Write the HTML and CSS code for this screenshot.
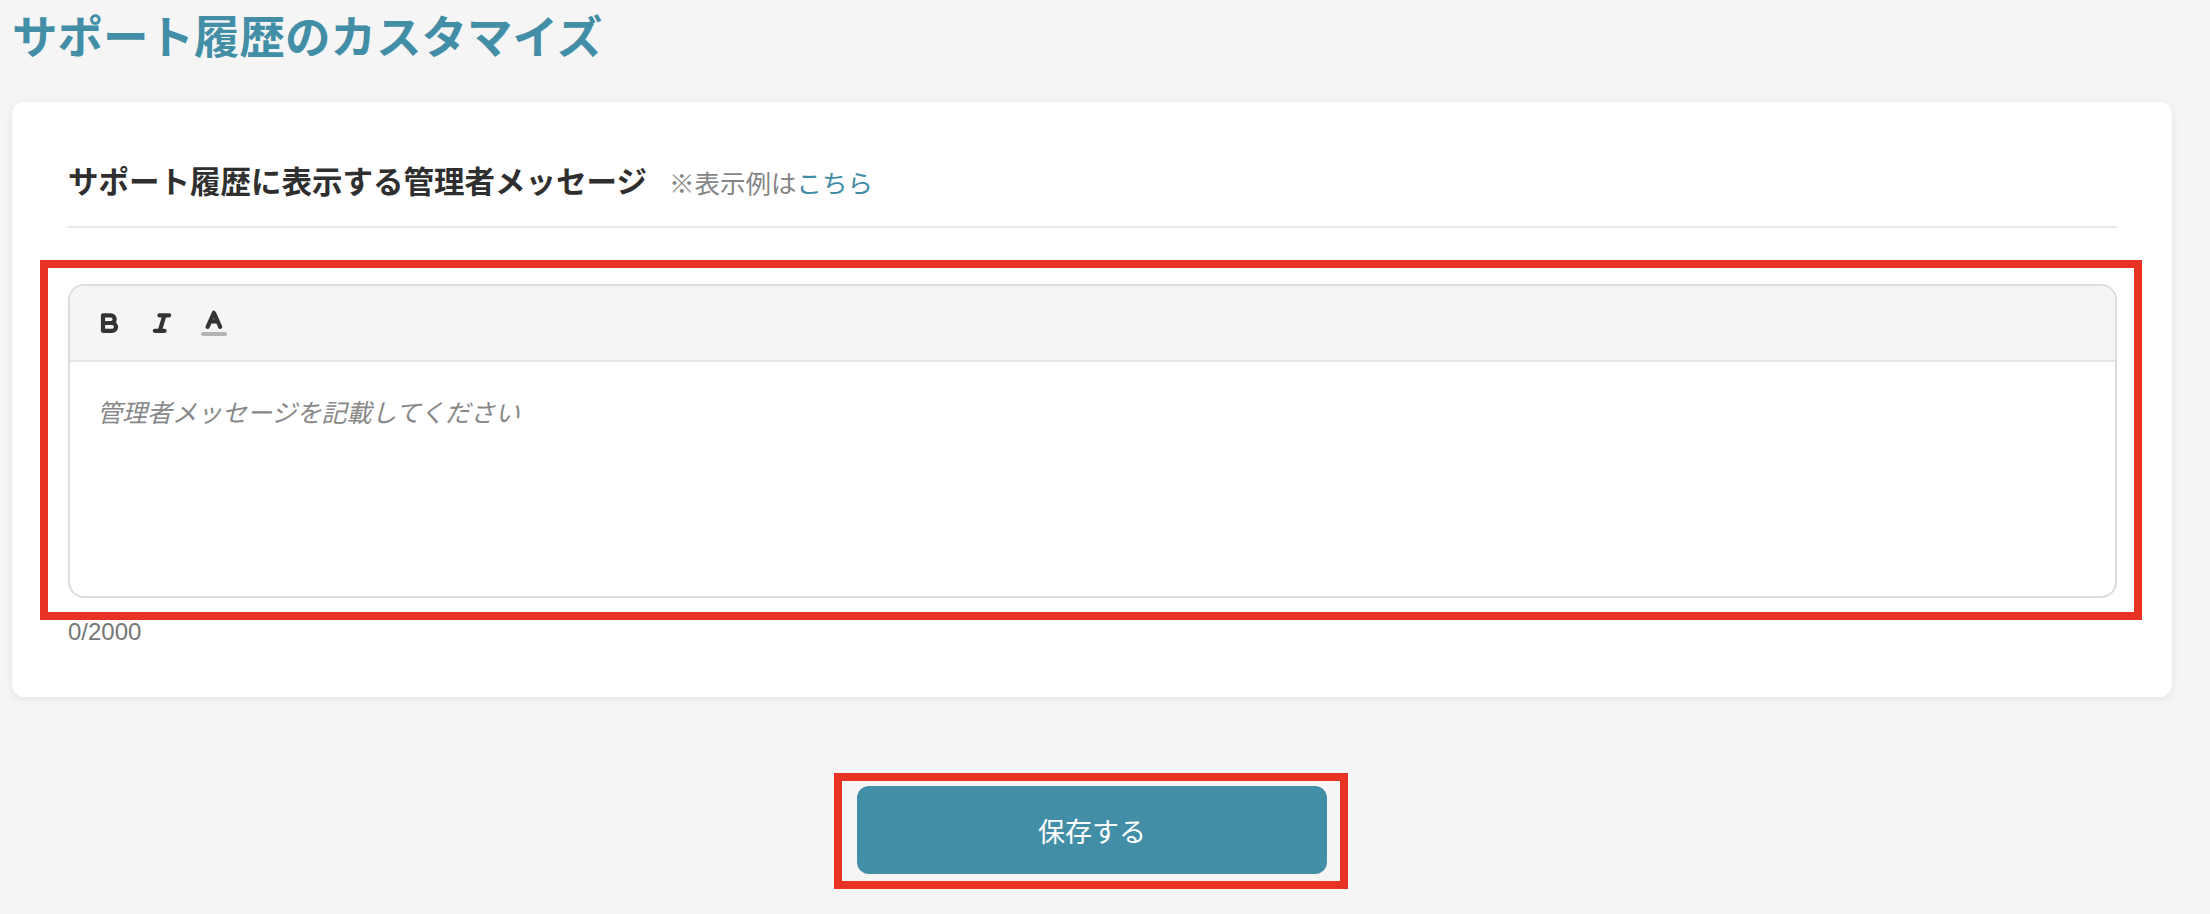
FILE: index.html
```html
<!DOCTYPE html>
<html lang="ja">
<head>
<meta charset="utf-8">
<title>サポート履歴のカスタマイズ</title>
<link rel="stylesheet" href="styles.css">
</head>
<body>
<main class="page">
  <h1 class="page-title">サポート履歴のカスタマイズ</h1>
  <section class="card">
    <div class="card-header">
      <h2 class="card-title">サポート履歴に表示する管理者メッセージ</h2>
      <span class="card-note">※表示例は<a class="note-link" href="#">こちら</a></span>
    </div>
    <div class="editor annotated">
      <div class="toolbar">
        <button class="tool" type="button" aria-label="Bold">
          <svg viewBox="0 0 30 30" width="30" height="30"><path class="ink" d="M8 7.3H15.8a3.85 3.85 0 0 1 0 7.7H8Z M8 15H17.1a3.9 3.9 0 0 1 0 7.8H8Z"/></svg>
        </button>
        <button class="tool" type="button" aria-label="Italic">
          <svg viewBox="0 0 30 30" width="30" height="30"><path class="ink" d="M12.4 7.3H22.2 M7.8 22.8H17.6 M17.4 7.3L12.8 22.8"/></svg>
        </button>
        <button class="tool" type="button" aria-label="Color">
          <svg viewBox="0 0 30 30" width="30" height="30"><path class="ink" d="M8.6 18.8L14.9 4.8L21.2 18.8 M11.1 13.4H18.7"/><path class="underline" d="M4 26H26"/></svg>
        </button>
      </div>
      <div class="editor-body">
        <p class="placeholder">管理者メッセージを記載してください</p>
      </div>
    </div>
    <div class="counter">0/2000</div>
  </section>
  <div class="actions">
    <div class="btn-frame">
      <button class="save-btn" type="button">保存する</button>
    </div>
  </div>
</main>
</body>
</html>
```

FILE: styles.css
```css
html, body {
  margin: 0;
  padding: 0;
}

body {
  background: #f5f5f5;
  font-family: "Noto Sans CJK JP", "Noto Sans", sans-serif;
  color: #333;
}

.page {
  width: 2160px;
  margin-left: 12px;
  padding-top: 8px;
  padding-bottom: 24px;
}

.page-title {
  margin: 0;
  font-size: 45.5px;
  line-height: 53px;
  font-weight: 700;
  color: #428ea6;
}

.card {
  margin-top: 41px;
  background: #fff;
  border-radius: 12px;
  box-shadow: 0 2px 10px rgba(0, 0, 0, 0.07);
  padding: 56px 55px 47px 56px;
}

.card-header {
  display: flex;
  align-items: baseline;
  padding-bottom: 23px;
  border-bottom: 2px solid #e9e9e9;
}

.card-title {
  margin: 0;
  font-size: 30.5px;
  line-height: 45px;
  font-weight: 700;
  color: #2f2f2f;
}

.card-note {
  margin-left: 22px;
  font-size: 25.5px;
  color: #858585;
}

.note-link {
  color: #3f8ca6;
  text-decoration: none;
}

.editor {
  margin-top: 56px;
  border: 2px solid #dcdcdc;
  border-radius: 16px;
  background: #fff;
}

.annotated {
  position: relative;
}

.annotated::after {
  content: "";
  position: absolute;
  top: -26px;
  right: -27px;
  bottom: -24px;
  left: -30px;
  border: 8px solid #e83324;
  pointer-events: none;
}

.toolbar {
  display: flex;
  align-items: center;
  gap: 22px;
  height: 74px;
  padding-left: 25px;
  background: #f5f5f5;
  border-bottom: 2px solid #e4e4e4;
  border-radius: 14px 14px 0 0;
}

.tool {
  display: flex;
  width: 30px;
  height: 30px;
  padding: 0;
  border: 0;
  background: none;
}

.tool svg {
  display: block;
}

.ink {
  fill: none;
  stroke: #333;
  stroke-width: 4.2;
  stroke-linecap: round;
  stroke-linejoin: round;
}

.underline {
  fill: none;
  stroke: #b3b3b3;
  stroke-width: 4;
  stroke-linecap: round;
}

.editor-body {
  height: 234px;
  padding: 32px 30px 0 27px;
  box-sizing: border-box;
}

.placeholder {
  margin: 0;
  font-size: 25px;
  line-height: 34px;
  font-style: italic;
  color: #888;
}

.counter {
  margin-top: 16px;
  font-family: "Liberation Sans", Arial, sans-serif;
  font-size: 24px;
  line-height: 36px;
  color: #777;
}

.actions {
  display: flex;
  justify-content: center;
  margin-top: 89px;
}

.btn-frame {
  position: relative;
  display: flex;
}

.btn-frame::after {
  content: "";
  position: absolute;
  top: -13px;
  right: -21px;
  bottom: -15px;
  left: -23px;
  border: 8px solid #e83324;
  pointer-events: none;
}

.save-btn {
  width: 470px;
  height: 88px;
  border: 0;
  border-radius: 12px;
  background: #428ea6;
  color: #fff;
  font-family: "Noto Sans CJK JP", "Noto Sans", sans-serif;
  font-size: 27px;
  font-weight: 400;
  cursor: pointer;
}
```
